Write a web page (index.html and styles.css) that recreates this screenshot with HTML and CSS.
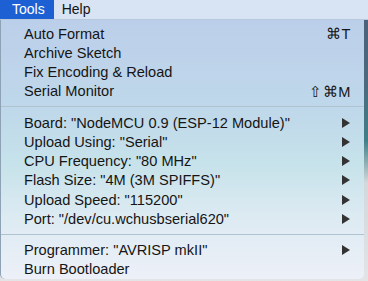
FILE: index.html
```html
<!DOCTYPE html>
<html lang="en">
<head>
    <meta charset="UTF-8">
    <title>Tools Menu</title>
    <link rel="stylesheet" href="styles.css">
</head>
<body>
    <div class="menubar">
        <span class="menu-title active">Tools</span>
        <span class="menu-title">Help</span>
    </div>
    <div class="menu">
        <div class="item"><span>Auto Format</span><span class="shortcut">&#8984;T</span></div>
        <div class="item"><span>Archive Sketch</span></div>
        <div class="item"><span>Fix Encoding &amp; Reload</span></div>
        <div class="item"><span>Serial Monitor</span><span class="shortcut">&#8679;&#8984;M</span></div>
        <div class="separator"></div>
        <div class="item"><span>Board: "NodeMCU 0.9 (ESP-12 Module)"</span><span class="arrow"></span></div>
        <div class="item"><span>Upload Using: "Serial"</span><span class="arrow"></span></div>
        <div class="item"><span>CPU Frequency: "80 MHz"</span><span class="arrow"></span></div>
        <div class="item"><span>Flash Size: "4M (3M SPIFFS)"</span><span class="arrow"></span></div>
        <div class="item"><span>Upload Speed: "115200"</span><span class="arrow"></span></div>
        <div class="item"><span>Port: "/dev/cu.wchusbserial620"</span><span class="arrow"></span></div>
        <div class="separator"></div>
        <div class="item"><span>Programmer: "AVRISP mkII"</span><span class="arrow"></span></div>
        <div class="item"><span>Burn Bootloader</span></div>
    </div>
</body>
</html>
```

FILE: styles.css
```css
body {
    margin: 0;
    width: 368px;
    height: 281px;
    overflow: hidden;
    font-family: "Liberation Sans", Arial, sans-serif;
    font-size: 14px;
    color: #151515;
    background: linear-gradient(#4c5f7a 0%, #4c6a7e 30%, #3f7f88 50%, #d4d8da 65%, #e2e4e6 100%);
}
.menubar {
    display: flex;
    height: 19px;
    background-color: #d8e3f3;
    border-bottom: 1px solid #b9c8dc;
}
.menu-title {
    padding: 0 8px;
    line-height: 19px;
}
.menu-title.active {
    padding: 0 9px 0 12px;
    background-color: #1d60d4;
    color: white;
}
.menu {
    width: 364px;
    height: 259px;
    box-sizing: border-box;
    padding: 4px 13px 3px 23px;
    font-size: 14.6px;
    border-left: 1px solid #8da2b4;
    border-radius: 0 0 5px 5px;
    background: linear-gradient(#bccfea 0%, #bfd8ea 35%, #c6e2ea 55%, #dceaf2 75%, #edf0f8 100%);
}
.item {
    display: flex;
    justify-content: space-between;
    align-items: center;
    height: 19.25px;
}
.shortcut {
    letter-spacing: 0.5px;
}
.arrow {
    width: 0;
    height: 0;
    margin-right: 1px;
    border-top: 5px solid transparent;
    border-bottom: 5px solid transparent;
    border-left: 8px solid #333;
}
.separator {
    height: 1px;
    margin: 5px -13px 6px -23px;
    background-color: #aec3cf;
}
```
